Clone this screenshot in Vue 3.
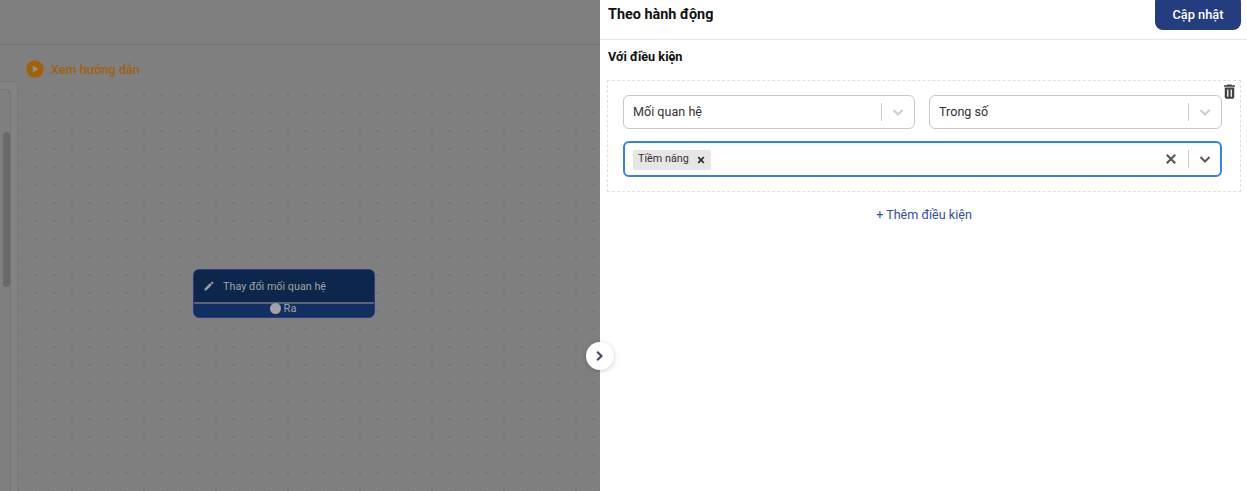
<template>
  <div class="page">
    <div class="stage">
      <div class="top-bar"></div>
      <div class="guide-row">
        <span class="play-icon">
          <svg width="18" height="18" viewBox="0 0 18 18">
            <circle cx="9" cy="9" r="8.7" fill="#a46208" />
            <path d="M6.8 5.4 L12.4 9 L6.8 12.6 Z" fill="#8f8f8f" />
          </svg>
        </span>
        <span class="guide-text">Xem hướng dẫn</span>
      </div>
      <div class="work">
        <div class="side">
          <div class="side-card">
            <div class="thumb"></div>
          </div>
        </div>
        <div class="canvas">
          <div class="node">
            <div class="node-head">
              <svg class="pen" width="12" height="12" viewBox="0 0 24 24">
                <path d="M3 17.25V21h3.75L17.81 9.94l-3.75-3.75L3 17.25zM20.71 7.04a1 1 0 0 0 0-1.41l-2.34-2.34a1 1 0 0 0-1.41 0l-1.83 1.83 3.75 3.75 1.83-1.83z" fill="#9a9a9a" />
              </svg>
              <span>Thay đổi mối quan hệ</span>
            </div>
            <div class="node-foot">
              <span class="port"></span>
              <span>Ra</span>
            </div>
          </div>
        </div>
      </div>
    </div>

    <div class="drawer">
      <button class="toggle">
        <svg width="12" height="12" viewBox="0 0 12 12">
          <path d="M3.2 1.8 L7.4 6 L3.2 10.2" fill="none" stroke="#444b5a" stroke-width="2.2" />
        </svg>
      </button>
      <div class="drawer-head">
        <span class="drawer-title">Theo hành động</span>
        <button class="save">Cập nhật</button>
      </div>
      <div class="drawer-body">
        <div class="section-title">Với điều kiện</div>
        <div class="cond-box">
          <svg class="trash" width="19" height="19" viewBox="0 0 24 24">
            <path d="M6 19a2 2 0 0 0 2 2h8a2 2 0 0 0 2-2V7H6v12zM9 9.5h1.6v9H9v-9zm4.4 0H15v9h-1.6v-9zM15.5 4l-1-1h-5l-1 1H5v2h14V4h-3.5z" fill="#424242" />
          </svg>
          <div class="cond-row">
            <div class="select" v-for="item in selects" :key="item">
              <span class="value">{{ item }}</span>
              <span class="sep"></span>
              <svg class="chev" width="14" height="14" viewBox="0 0 14 14">
                <path d="M2.5 5 L7 9.5 L11.5 5" fill="none" stroke="#cccccc" stroke-width="2" />
              </svg>
            </div>
          </div>
          <div class="select focused">
            <span class="tag">
              <span class="tag-text">Tiềm năng</span>
              <svg width="8" height="8" viewBox="0 0 8 8">
                <path d="M1.2 1.2 L6.8 6.8 M6.8 1.2 L1.2 6.8" stroke="#333" stroke-width="1.8" />
              </svg>
            </span>
            <span class="fill"></span>
            <svg class="clear" width="12" height="12" viewBox="0 0 12 12">
              <path d="M1.8 1.8 L10.2 10.2 M10.2 1.8 L1.8 10.2" stroke="#595959" stroke-width="2.2" />
            </svg>
            <span class="sep"></span>
            <svg class="chev" width="14" height="14" viewBox="0 0 14 14">
              <path d="M2.5 5 L7 9.5 L11.5 5" fill="none" stroke="#595959" stroke-width="2" />
            </svg>
          </div>
        </div>
        <div class="add-row">+ Thêm điều kiện</div>
      </div>
    </div>
  </div>
</template>

<script setup>
const selects = ['Mối quan hệ', 'Trong số']
</script>

<style>
html, body { margin: 0; overflow: hidden; }
</style>

<style scoped>
.page {
  display: flex; width: 1247px; height: 491px; overflow: hidden;
  font-family: Roboto, "Noto Sans", sans-serif;
}
.stage {
  width: 600px; flex: none; display: flex; flex-direction: column;
  background: #7f7f7f;
}
.top-bar { height: 44px; flex: none; border-bottom: 1px solid #747474; }
.guide-row {
  height: 36px; flex: none; display: flex; align-items: center; gap: 7px;
  padding: 12px 0 0 26px; box-sizing: border-box;
}
.play-icon { display: flex; }
.guide-text { font-size: 12.6px; font-weight: 500; color: #a0620f; }
.work { flex: 1; display: flex; min-height: 0; }
.side {
  width: 18px; flex: none; box-sizing: border-box; padding-top: 7px;
  background: #828383; border-top: 1px solid #787878; border-right: 1px solid #7a7b7b;
}
.side-card {
  width: 11px; height: 100%; box-sizing: border-box; padding-top: 42px;
  background: #7f7f7f;
  border: 1px solid #747575; border-left: 0; border-bottom: 0;
  border-top-right-radius: 6px;
}
.thumb { width: 7px; height: 155px; margin-left: 3px; background: #6a6a6a; border-radius: 4px; }
.canvas {
  flex: 1; position: relative;
  background-image: radial-gradient(circle, #747474 1px, transparent 1.2px);
  background-size: 18px 18px;
  background-position: 9px 5px;
}
.node {
  position: absolute; left: 175px; top: 188px; width: 182px; height: 49px;
  box-sizing: border-box; border: 1px solid #2d3a8c; border-radius: 6px;
  background: #12305f; overflow: hidden; font-size: 10.8px; color: #a0a4a4;
}
.node-head {
  height: 34px; box-sizing: border-box; display: flex; align-items: center; gap: 8px;
  padding-left: 9px; background: #0c274b; border-bottom: 2px solid #5a6478;
}
.node-foot {
  display: flex; align-items: center; justify-content: center; gap: 3px;
  height: 10px; margin-top: -1px; padding-right: 2px; font-size: 11px;
}
.port { flex: none; width: 11px; height: 11px; border-radius: 50%; background: #a3a3a3; }

.drawer {
  flex: 1; position: relative; background: #fff;
  display: flex; flex-direction: column;
}
.toggle {
  position: absolute; left: -14px; top: 342px; width: 28px; height: 28px;
  display: flex; align-items: center; justify-content: center; padding: 0;
  border: 0; border-radius: 50%; background: #fff;
  box-shadow: 0 1px 5px rgba(0, 0, 0, .2);
}
.drawer-head {
  height: 40px; flex: none; box-sizing: border-box;
  display: flex; align-items: flex-end; justify-content: space-between;
  padding: 0 6px 9px 8px; border-bottom: 1px solid #e6e6e6;
}
.drawer-title { font-size: 14.4px; font-weight: 700; color: #111; margin-bottom: 7px; }
.save {
  width: 86px; height: 36px; border: 0; border-radius: 8px; padding: 4px 0 0;
  background: #233d7f; color: #fff; font: 500 12.8px Roboto, sans-serif;
}
.drawer-body { padding: 9px 6px 0 7px; }
.section-title { font-size: 12.7px; font-weight: 700; color: #111; height: 31px; line-height: 15px; padding-left: 1px; box-sizing: border-box; }
.cond-box {
  position: relative; box-sizing: border-box; height: 112px; padding: 14px 18px 0 15px;
  border: 1px dashed #e0e0e0;
  display: flex; flex-direction: column; gap: 12px;
}
.trash { position: absolute; right: 1px; top: 1px; }
.cond-row { display: grid; grid-template-columns: 292px 293px; gap: 14px; }
.select {
  height: 34px; box-sizing: border-box; display: flex; align-items: center;
  padding: 0 10px 0 9px; border: 1px solid #c8c8c8; border-radius: 6px;
  font-size: 12.6px; color: #333;
}
.value { flex: 1; margin-top: -2px; }
.sep { width: 1px; height: 18px; background: #cccccc; margin: 0 9px 0 0; }
.chev { margin-right: -1px; }
.focused { height: 36px; border: 2px solid #2e84f6; padding: 0 9px 0 8px; }
.tag {
  display: flex; align-items: center; gap: 8px; height: 20px; padding: 0 6px 0 5px;
  background: #e6e6e6; border-radius: 2px; margin-top: 1px;
}
.tag-text { font-size: 10.8px; color: #333; margin-top: -3px; }
.fill { flex: 1; }
.clear { margin-right: 11px; }
.add-row { margin-top: 15px; text-align: center; font-size: 12.6px; color: #31509f; }
</style>
